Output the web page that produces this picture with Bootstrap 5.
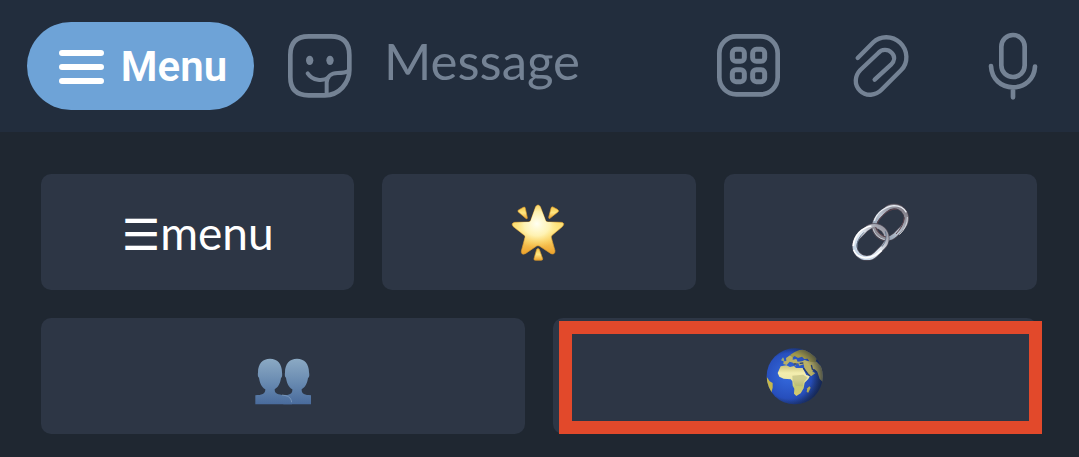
<!DOCTYPE html>
<html lang="en">
<head>
<meta charset="utf-8">
<meta name="viewport" content="width=device-width, initial-scale=1">
<title>Message</title>
<link href="https://cdn.jsdelivr.net/npm/bootstrap@5.3.0/dist/css/bootstrap.min.css" rel="stylesheet">
<style>
  body { background: #1f2731; font-family: "Lato", "Liberation Sans", sans-serif; }
  .composer { background: #222d3d; padding: 22px 34px 22px 27px; }
  .menu-pill { --bs-btn-bg: #6ea3d7; --bs-btn-hover-bg: #6097cf; --bs-btn-color: #fff; --bs-btn-hover-color: #fff;
    width: 227px; height: 88px; border: 0; font: 600 42px/48px Roboto, sans-serif; gap: 17px; padding: 2px 0 0 5px;
    margin-right: 34px; }
  .tool { color: #748294; line-height: 0; }
  .tool svg { width: 64px; height: 64px; overflow: visible; }
  .tools { gap: 68px; }
  .message-input, .message-input:focus { background: none; border: 0; box-shadow: none; color: #748294;
    font-size: 51px; line-height: 64px; padding: 0 0 10px; min-width: 0; }
  .message-input::placeholder { color: #748294; opacity: 1; }
  .keys { padding: 42px 42px 23px 41px; gap: 28px; }
  .key-row { gap: 28px; }
  .key { --bs-btn-bg: #2d3645; --bs-btn-hover-bg: #354052; --bs-btn-color: #fff; --bs-btn-hover-color: #fff;
    flex: 1 1 0; height: 116px; border: 0; border-radius: 10px; font-size: 46px; line-height: 56px; padding: 0; }
  .key svg { width: 80px; height: 80px; }
  .text-key { padding-top: 3px; }
  .trigram { font-family: "DejaVu Sans", sans-serif; font-size: 43px; }
  .highlight { top: 3px; right: -5px; bottom: 0; left: 6px; border: 13px solid #e2492b; pointer-events: none; }
</style>
</head>
<body>
<form class="composer d-flex align-items-center">
  <button type="button" class="btn menu-pill rounded-pill d-flex align-items-center justify-content-center flex-shrink-0">
    <svg width="45" height="34" viewBox="0 0 45 34" stroke="#fff" stroke-width="6" stroke-linecap="round" aria-hidden="true"><path d="M3 3H42M3 17H42M3 31H42"/></svg>
    <span>Menu</span>
  </button>
  <button type="button" class="btn tool border-0 p-0 flex-shrink-0" aria-label="Stickers">
    <svg viewBox="54 57 192 192" fill="none" stroke="currentColor" stroke-width="14" stroke-linecap="round" stroke-linejoin="round">
      <path d="M61 120C61 82 79 64 116 64H183C220 64 238 82 238 120V166C238 204 207 241 165 241H116C79 241 61 223 61 186Z"/>
      <path d="M113 175C128 198 159 199 175 188" stroke-width="12"/>
      <path d="M170 238V203C170 184 184 174 203 174C218 174 227 173 235 168" stroke-width="12"/>
      <ellipse cx="119" cy="136" rx="11" ry="14" fill="currentColor" stroke="none"/><ellipse cx="180" cy="136" rx="11" ry="14" fill="currentColor" stroke="none"/>
    </svg>
  </button>
  <input id="message" type="text" class="form-control message-input flex-fill mx-4 ps-2" placeholder="Message" aria-label="Message" autocomplete="off">
  <div class="tools d-flex flex-shrink-0">
    <button type="button" class="btn tool border-0 p-0" aria-label="Bot keyboard">
      <svg viewBox="51 42 192 192" fill="none" stroke="currentColor" stroke-width="14">
        <rect x="58" y="49" width="175" height="174" rx="51"/>
        <g stroke-width="15"><rect x="97" y="88" width="36" height="36" rx="11"/><rect x="158" y="88" width="36" height="36" rx="11"/><rect x="97" y="149" width="36" height="36" rx="11"/><rect x="158" y="149" width="36" height="36" rx="11"/></g>
      </svg>
    </button>
    <button type="button" class="btn tool border-0 p-0" aria-label="Attach">
      <svg viewBox="27 42 192 192" fill="none" stroke="currentColor" stroke-width="13" stroke-linecap="round" stroke-linejoin="round">
        <path d="M53 114L100 67C119 48 156 45 180 68C204 91 206 128 183 151L126 208C107 228 78 230 60 212C42 194 44 168 61 150L115 99C125 87 144 87 155 98C166 109 164 123 153 134L104 179"/>
      </svg>
    </button>
    <button type="button" class="btn tool border-0 p-0" aria-label="Record voice">
      <svg viewBox="33 42 192 192" fill="none" stroke="currentColor" stroke-width="14" stroke-linecap="round">
        <rect x="94" y="45" width="70" height="126" rx="35"/>
        <path d="M63 138C65 177 93 202 129 202S193 177 195 140M129 203V232"/>
      </svg>
    </button>
  </div>
</form>

<main class="keys d-flex flex-column">
  <div class="key-row d-flex">
    <button type="button" class="btn key text-key"><span class="trigram">☰</span>menu</button>
    <button type="button" class="btn key" aria-label="Star">
      <svg viewBox="-4 -9 240 240">
        <defs>
          <linearGradient id="gold" x1="0" y1="0" x2="0" y2="1"><stop offset="0" stop-color="#f5c747"/><stop offset=".5" stop-color="#ffe783"/><stop offset="1" stop-color="#eda22b"/></linearGradient>
          <radialGradient id="shine" cx=".48" cy=".38" r=".5"><stop offset="0" stop-color="#fffff2"/><stop offset=".5" stop-color="#fff6bd" stop-opacity=".85"/><stop offset="1" stop-color="#ffdc60" stop-opacity="0"/></radialGradient>
        </defs>
        <g fill="url(#gold)" stroke="#d99a2c" stroke-width="2" stroke-linejoin="round">
          <path d="M53 50Q51 46 56 44L69 37Q74 34 75 40L81 68Q81 74 76 70Z"/>
          <path d="M174 50Q176 46 171 43L158 36Q153 34 152 40L145 67Q145 73 150 69Z"/>
          <path d="M109 163Q113 158 117 163L127 191Q128 196 122 196H105Q100 196 101 191Z"/>
          <path d="M106 35Q113 25 120 35L136 77Q138 81 143 81L183 82Q196 84 186 95L155 121Q152 124 153 128L164 167Q164 180 152 176L117 153Q113 151 109 153L75 176Q62 181 63 168L74 127Q75 123 72 121L39 95Q30 85 43 82L84 81Q89 81 91 77Z"/>
        </g>
        <path fill="url(#shine)" d="M106 35Q113 25 120 35L136 77Q138 81 143 81L183 82Q196 84 186 95L155 121Q152 124 153 128L164 167Q164 180 152 176L117 153Q113 151 109 153L75 176Q62 181 63 168L74 127Q75 123 72 121L39 95Q30 85 43 82L84 81Q89 81 91 77Z"/>
      </svg>
    </button>
    <button type="button" class="btn key" aria-label="Link">
      <svg viewBox="0 -9 240 240" fill="none">
        <defs>
          <linearGradient id="steel" x1="0" y1="0" x2="1" y2="0"><stop offset="0" stop-color="#8494a8"/><stop offset=".45" stop-color="#b9c3cf"/><stop offset="1" stop-color="#85828c"/></linearGradient>
          <linearGradient id="chrome" x1="0" y1="0" x2="1" y2="0"><stop offset="0" stop-color="#c3d3e4"/><stop offset=".5" stop-color="#e4ebf2"/><stop offset="1" stop-color="#9c9da8"/></linearGradient>
        </defs>
        <rect x="98" y="45" width="106" height="74" rx="37" transform="rotate(-45 151 82)" stroke="#48434e" stroke-width="16"/>
        <rect x="98" y="45" width="106" height="74" rx="37" transform="rotate(-45 151 82)" stroke="url(#steel)" stroke-width="12"/>
        <path d="M103 78C110 52 137 34 162 32Q187 32 199 52" stroke="#e8edf3" stroke-width="4"/>
        <path d="M202 66Q203 96 178 119" stroke="#d5d9df" stroke-width="3"/>
        <path d="M110 104Q106 84 128 61Q147 42 170 42M193 67Q191 93 168 117" stroke="#5e4650" stroke-width="3"/>
        <rect x="39" y="104" width="106" height="74" rx="37" transform="rotate(-45 92 141)" stroke="#514d59" stroke-width="16"/>
        <rect x="39" y="104" width="106" height="74" rx="37" transform="rotate(-45 92 141)" stroke="url(#chrome)" stroke-width="12"/>
        <path d="M40 153C42 121 65 98 94 93M41 164Q49 187 77 189Q105 186 125 166" stroke="#fff" stroke-width="5"/>
        <path d="M51 158Q49 133 72 112M136 109Q144 132 126 155" stroke="#66788f" stroke-width="3"/>
        <path d="M101 98Q108 126 136 132" stroke="#48434e" stroke-width="15"/>
        <path d="M101 96Q108 124 136 131" stroke="#8d8b94" stroke-width="10"/>
        <path d="M107 97Q115 120 137 126" stroke="#60464f" stroke-width="3"/>
        <path d="M99 101Q107 128 134 134" stroke="#c5cad2" stroke-width="3"/>
      </svg>
    </button>
  </div>
  <div class="key-row d-flex">
    <button type="button" class="btn key" aria-label="People">
      <svg viewBox="9 -27 240 240">
        <defs><linearGradient id="person" gradientUnits="userSpaceOnUse" x1="0" y1="40" x2="0" y2="178"><stop offset="0" stop-color="#8caac4"/><stop offset=".55" stop-color="#6789b0"/><stop offset="1" stop-color="#496b9c"/></linearGradient></defs>
        <g fill="url(#person)">
          <path d="M130 178V151C148 150 158 148 157 133C145 126 140 112 138 98Q133 96 135 82C135 56 149 41 171 41S207 56 207 82Q210 96 204 99C202 113 197 126 185 133C184 148 195 150 213 151V178Z"/>
          <path d="M46 178V151C65 150 76 148 76 133C64 126 59 112 57 98Q52 96 54 82C54 56 68 41 90 41S126 56 126 82Q128 96 123 99C121 113 116 126 104 133C104 148 114 148 133 151Q151 154 156 178Z"/>
        </g>
        <path d="M126 150C143 152 153 156 155 172" fill="none" stroke="#89a6c5" stroke-width="2"/>
      </svg>
    </button>
    <button type="button" class="btn key position-relative" aria-label="Globe">
      <svg viewBox="0 -12 240 240">
        <defs>
          <radialGradient id="sea" cx=".38" cy=".48" r=".62"><stop offset="0" stop-color="#356be0"/><stop offset=".65" stop-color="#274fbd"/><stop offset="1" stop-color="#1c3678"/></radialGradient>
          <linearGradient id="land" x1="0" y1="0" x2="0" y2="1"><stop offset="0" stop-color="#c9c278"/><stop offset=".25" stop-color="#f3edae"/><stop offset=".45" stop-color="#eee9a8"/><stop offset=".68" stop-color="#c3c975"/><stop offset="1" stop-color="#d8ca6d"/></linearGradient>
          <radialGradient id="shade" cx=".4" cy=".5" r=".63"><stop offset=".65" stop-color="#101b34" stop-opacity="0"/><stop offset="1" stop-color="#101b34" stop-opacity=".7"/></radialGradient>
          <clipPath id="disc"><circle cx="119" cy="109" r="84"/></clipPath>
        </defs>
        <circle cx="119" cy="109" r="84" fill="url(#sea)"/>
        <g clip-path="url(#disc)">
          <path fill="url(#land)" d="M77 79L94 76 105 81 117 78 123 84 143 84 154 105 165 108 160 117 149 128 146 145 137 160 124 168 117 161 118 146 113 137 112 124 107 118 86 116 73 110 68 99Z"/>
          <path fill="#b0b071" d="M112 107L145 104 158 113 146 127 143 139 121 137 113 124Z" opacity=".5"/>
          <path fill="#b9b065" d="M85 72L86 64 94 63 93 54 105 46 114 50 113 59 124 57 128 65 141 64 149 60 160 64 170 60 185 65 207 87V130L194 117 187 95 178 87 172 94 181 100 168 109 159 102 148 84 146 73 133 77 129 68 121 77 114 68 104 65 95 75Z"/>
          <path fill="#a0984b" d="M106 44L119 36 133 30 154 28 187 52 181 67 164 65 158 56 148 57 141 50 129 54 119 48 112 53Z"/>
          <path d="M145 84L158 101 165 108M169 75L172 87 184 96M116 72L125 72M134 70L145 69" fill="none" stroke="#263f77" stroke-width="4"/>
          <path fill="#b7ae58" d="M163 139L167 143 160 158 155 156 157 145Z"/>
          <path fill="#c6b84c" d="M35 110L44 124 53 129 53 143 47 164 32 143Z"/>
          <path fill="#9aa875" d="M78 61L84 52 87 57 88 65Z"/>
        </g>
        <circle cx="119" cy="109" r="84" fill="url(#shade)"/>
      </svg>
      <span class="highlight position-absolute"></span>
    </button>
  </div>
</main>
<script src="https://cdn.jsdelivr.net/npm/bootstrap@5.3.0/dist/js/bootstrap.bundle.min.js"></script>
</body>
</html>
